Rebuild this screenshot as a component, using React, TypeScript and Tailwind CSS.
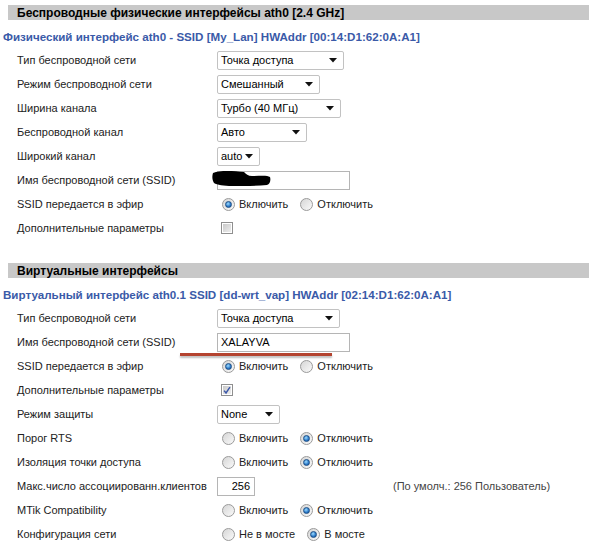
import React from "react";

// --- небольшие контролы в стиле Windows 7 ---
const Arrow = () => (
  <svg width="8" height="5" viewBox="0 0 8 5" className="shrink-0">
    <path d="M0 0 H8 L4 4.5 Z" fill="#111" />
  </svg>
);

const Select = ({ value, w }: { value: string; w: number }) => (
  <div
    className="h-[19px] flex items-center justify-between pl-[3px] pr-[6px] border border-[#c2c2c2] rounded-[2px] bg-white text-[11px] text-black"
    style={{ width: w }}
  >
    <span>{value}</span>
    <Arrow />
  </div>
);

const Radio = ({ checked }: { checked?: boolean }) => (
  <span className="w-[13px] h-[13px] rounded-full border border-[#9a9a9a] bg-linear-to-br from-[#d6d6d6] to-[#fafafa] flex items-center justify-center shrink-0">
    {checked && (
      <span className="w-[7px] h-[7px] rounded-full bg-[radial-gradient(circle_at_40%_35%,#9cdcff,#2a78c8_60%,#0d4a8c)] border border-[#1d4f86]" />
    )}
  </span>
);

const RadioGroup = ({ a, b, first }: { a: string; b: string; first?: boolean }) => (
  <div className="flex items-center pl-[5px] text-[11px] text-[#222]">
    <Radio checked={first} />
    <span className="ml-[4px]">{a}</span>
    <span className="ml-[12px]" />
    <Radio checked={!first} />
    <span className="ml-[4px]">{b}</span>
  </div>
);

const Checkbox = ({ checked }: { checked?: boolean }) => (
  <span className="ml-[4px] w-[12px] h-[12px] border border-[#8f8f8f] bg-white flex items-center justify-center">
    <span className="w-[8px] h-[8px] bg-linear-to-br from-[#c9c9c9] to-[#eeeeee] flex items-center justify-center">
      {checked && (
        <svg width="9" height="9" viewBox="0 0 9 9">
          <path d="M1.2 4.6 L3.4 7.3 L7.8 0.8" stroke="#3b57a8" strokeWidth="1.6" fill="none" />
        </svg>
      )}
    </span>
  </span>
);

const Input = ({ value, w, right }: { value: string; w: number; right?: boolean }) => (
  <div
    className={`h-[19px] flex items-center border border-[#b5b5b5] bg-white text-[11px] text-black px-[3px] ${right ? "justify-end pr-[4px]" : ""}`}
    style={{ width: w }}
  >
    {value}
  </div>
);

const Row = ({ label, children }: { label: string; children: React.ReactNode }) => (
  <div className="relative h-[24px] flex items-center">
    <div className="w-[209px] pl-[9px] text-[11px] text-[#222] whitespace-nowrap">{label}</div>
    {children}
  </div>
);

const Header = ({ title }: { title: string }) => (
  <div className="h-[15px] bg-[#c8c8c8] flex items-center pl-[9px] text-[12px] font-bold text-black whitespace-nowrap">
    {title}
  </div>
);

const Legend = ({ title }: { title: string }) => (
  <div className="h-[23px] mt-[5px] -ml-[5px] flex items-center text-[11.6px] font-bold text-[#3a5aa8] whitespace-nowrap">
    {title}
  </div>
);

export default function App() {
  return (
    <div className="w-[597px] h-[549px] bg-white overflow-hidden px-[8px] pt-[5px] font-['Liberation_Sans',Arial,sans-serif]">
      {/* Физический интерфейс */}
      <Header title="Беспроводные физические интерфейсы ath0 [2.4 GHz]" />
      <Legend title="Физический интерфейс ath0 - SSID [My_Lan] HWAddr [00:14:D1:62:0A:A1]" />
      <Row label="Тип беспроводной сети">
        <Select value="Точка доступа" w={127} />
      </Row>
      <Row label="Режим беспроводной сети">
        <Select value="Смешанный" w={103} />
      </Row>
      <Row label="Ширина канала">
        <Select value="Турбо (40 МГц)" w={124} />
      </Row>
      <Row label="Беспроводной канал">
        <Select value="Авто" w={90} />
      </Row>
      <Row label="Широкий канал">
        <Select value="auto" w={43} />
      </Row>
      <Row label="Имя беспроводной сети (SSID)">
        <Input value="" w={133} />
        {/* замазанное имя сети */}
        <svg className="absolute left-[204px] top-[2px]" width="60" height="18" viewBox="0 0 60 18">
          <path
            d="M1 3 C8 0 22 1 32 2 C34 4 36 6 40 6 C48 6 55 5 58 7 C59 10 58 14 55 15 C44 16 30 16 20 16 C12 16 5 15 2 13 C0 10 0 6 1 3 Z"
            fill="#000"
          />
        </svg>
      </Row>
      <Row label="SSID передается в эфир">
        <RadioGroup a="Включить" b="Отключить" first />
      </Row>
      <Row label="Дополнительные параметры">
        <Checkbox />
      </Row>

      {/* Виртуальные интерфейсы */}
      <div className="mt-[23px]">
        <Header title="Виртуальные интерфейсы" />
      </div>
      <Legend title="Виртуальный интерфейс ath0.1 SSID [dd-wrt_vap] HWAddr [02:14:D1:62:0A:A1]" />
      <Row label="Тип беспроводной сети">
        <Select value="Точка доступа" w={123} />
      </Row>
      <Row label="Имя беспроводной сети (SSID)">
        <Input value="XALAYVA" w={133} />
        <div className="absolute left-[172px] top-[23px] w-[152px] h-[3px] bg-[#b4432f] shadow-[0_2px_2px_rgba(0,0,0,0.25)]" />
      </Row>
      <Row label="SSID передается в эфир">
        <RadioGroup a="Включить" b="Отключить" first />
      </Row>
      <Row label="Дополнительные параметры">
        <Checkbox checked />
      </Row>
      <Row label="Режим защиты">
        <Select value="None" w={63} />
      </Row>
      <Row label="Порог RTS">
        <RadioGroup a="Включить" b="Отключить" />
      </Row>
      <Row label="Изоляция точки доступа">
        <RadioGroup a="Включить" b="Отключить" />
      </Row>
      <Row label="Макс.число ассоциированн.клиентов">
        <Input value="256" w={38} right />
        <span className="ml-[138px] text-[11px] text-[#444]">(По умолч.: 256 Пользователь)</span>
      </Row>
      <Row label="MTik Compatibility">
        <RadioGroup a="Включить" b="Отключить" />
      </Row>
      <Row label="Конфигурация сети">
        <RadioGroup a="Не в мосте" b="В мосте" />
      </Row>
    </div>
  );
}
